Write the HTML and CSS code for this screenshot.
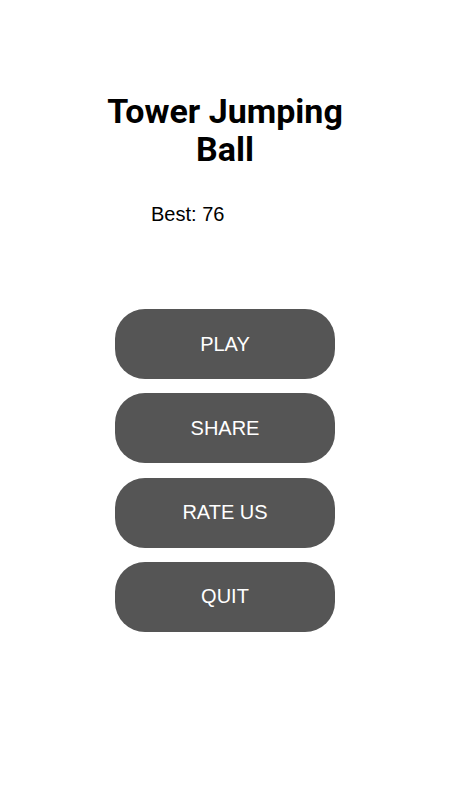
FILE: index.html
```html
<!DOCTYPE html>
<html>
<head>
    <title>Tower Jumping Ball</title>
    <link rel="stylesheet" href="styles.css">
</head>
<body>
    <div class="menu">
        <h1 class="title">Tower Jumping<br>Ball</h1>
        <p class="best">Best: 76</p>

        <div class="buttons">
            <button class="btn">PLAY</button>
            <button class="btn">SHARE</button>
            <button class="btn">RATE US</button>
            <button class="btn">QUIT</button>
        </div>
    </div>
</body>
</html>
```

FILE: styles.css
```css
body {
    margin: 0;
    background: #fff;
    font-family: "Liberation Sans", Arial, sans-serif;
}

.menu {
    display: flex;
    flex-direction: column;
    align-items: center;
    padding-top: 92px;
}

.title {
    margin: 0;
    font-family: Roboto, "Liberation Sans", sans-serif;
    font-weight: 700;
    font-size: 34px;
    line-height: 38px;
    text-align: center;
    color: #000;
}

.best {
    align-self: flex-start;
    margin: 35px 0 0 151px;
    font-size: 20px;
    line-height: 23px;
    color: #000;
}

.buttons {
    display: flex;
    flex-direction: column;
    gap: 14.3px;
    margin-top: 83px;
}

.btn {
    width: 220px;
    height: 70px;
    border: none;
    border-radius: 30px;
    background-color: #555555;
    color: #fff;
    font-family: "Liberation Sans", Arial, sans-serif;
    font-size: 20px;
    padding: 0;
}
```
